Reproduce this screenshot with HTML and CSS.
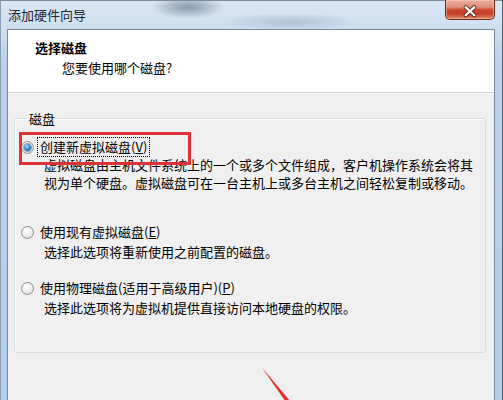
FILE: index.html
```html
<!DOCTYPE html>
<html lang="zh-CN">

<head>
    <meta charset="UTF-8">
    <meta name="viewport" content="width=device-width, initial-scale=1.0">
    <title>添加硬件向导</title>
    <link rel="stylesheet" href="styles.css">
</head>

<body>
    <div class="window">
        <div class="titlebar">
            <span class="title">添加硬件向导</span>
            <button class="close" aria-label="关闭">
                <svg width="50" height="20" viewBox="0 0 50 20">
                    <path d="M20.5 7 L29.5 15.5 M29.5 7 L20.5 15.5" stroke="#5a2418" stroke-width="4.2" stroke-linecap="round" />
                    <path d="M20.5 7 L29.5 15.5 M29.5 7 L20.5 15.5" stroke="#ffffff" stroke-width="2.4" stroke-linecap="round" />
                </svg>
            </button>
        </div>

        <div class="client">
            <div class="header">
                <div class="header-title">选择磁盘</div>
                <div class="header-sub">您要使用哪个磁盘?</div>
            </div>

            <div class="content">
                <fieldset class="group">
                    <legend>磁盘</legend>

                    <div class="option option-new">
                        <label class="option-label">
                            <span class="radio checked"></span>
                            <span class="caption focused">创建新虚拟磁盘(<u>V</u>)</span>
                        </label>
                        <p class="desc">虚拟磁盘由主机文件系统上的一个或多个文件组成，客户机操作系统会将其<br>视为单个硬盘。虚拟磁盘可在一台主机上或多台主机之间轻松复制或移动。</p>
                    </div>

                    <div class="option option-existing">
                        <label class="option-label">
                            <span class="radio"></span>
                            <span class="caption">使用现有虚拟磁盘(<u>E</u>)</span>
                        </label>
                        <p class="desc">选择此选项将重新使用之前配置的磁盘。</p>
                    </div>

                    <div class="option option-physical">
                        <label class="option-label">
                            <span class="radio"></span>
                            <span class="caption">使用物理磁盘(适用于高级用户)(<u>P</u>)</span>
                        </label>
                        <p class="desc">选择此选项将为虚拟机提供直接访问本地硬盘的权限。</p>
                    </div>
                </fieldset>
            </div>
        </div>
    </div>

    <!-- 标注：红框和箭头 -->
    <div class="mark-box"></div>
    <svg class="mark-arrow" width="45" height="40" viewBox="0 0 45 40">
        <polygon points="6.7,7.3 36.6,42.8 33.2,45.3" fill="#e0302f" />
    </svg>
</body>

</html>
```

FILE: styles.css
```css
* {
    box-sizing: border-box;
}

html,
body {
    margin: 0;
    height: 100%;
    overflow: hidden;
}

body {
    position: relative;
    font-family: "Noto Sans CJK SC", "Microsoft YaHei", sans-serif;
    font-size: 13px;
    color: #000;
    background: #b8d0ea;
}

.window {
    display: flex;
    flex-direction: column;
    height: 100%;
    padding: 0 8px 0 7px;
    background-color: #b8d0ea;
    background-image:
        radial-gradient(ellipse 38px 12px at 188px 7px, rgba(70, 92, 118, 0.55), transparent),
        radial-gradient(ellipse 70px 9px at 290px 22px, rgba(110, 135, 165, 0.35), transparent),
        linear-gradient(180deg, #dbe7f3 0, #cfe0f1 26px, #bad2eb 60px, #b6cfea 100%);
    box-shadow: inset 1px 0 #8d9fb6, inset -1px 0 #4f5e70, inset 0 1px #7d8c9e;
}

.titlebar {
    display: flex;
    justify-content: space-between;
    align-items: flex-start;
    height: 29px;
    flex-shrink: 0;
}

.title {
    padding: 6px 0 0 1px;
    line-height: 18px;
    color: #1b2633;
}

.close {
    width: 50px;
    height: 20px;
    padding: 0;
    border: 1px solid #6a2a1e;
    border-top: none;
    border-radius: 0 0 5px 5px;
    background: linear-gradient(180deg, #eab0a2 0, #df8c78 38%, #c9482c 52%, #c3412a 72%, #df8a68 100%);
    box-shadow: inset 0 0 0 1px rgba(255, 210, 190, 0.45);
    display: flex;
}

.client {
    flex: 1;
    display: flex;
    flex-direction: column;
    border: 1px solid #7b8899;
    border-bottom: none;
    background: #f0f0f0;
}

.header {
    background: #fff;
    padding: 9px 0 15px 27px;
    border-bottom: 1px solid #d0d0d0;
    box-shadow: 0 1px 0 #fafafa;
}

.header-title {
    font-weight: bold;
    line-height: 18px;
}

.header-sub {
    margin-top: 2px;
    padding-left: 27px;
    line-height: 18px;
}

.content {
    padding: 17px 8px 0 6px;
}

.group {
    margin: 0;
    padding: 11px 8px 35px 6px;
    border: 1px solid #d5dfe5;
    border-radius: 3px;
    box-shadow: inset 1px 1px 0 #fff;
}

.group legend {
    margin-left: 6px;
    padding: 0 2px;
    line-height: 17px;
}

.option-label {
    display: flex;
    align-items: center;
    line-height: 18px;
}

.option-existing {
    margin-top: 31px;
}

.option-physical {
    margin-top: 18px;
}

.radio {
    width: 13px;
    height: 13px;
    margin-right: 4px;
    border-radius: 50%;
    border: 1px solid #8f9193;
    background: radial-gradient(circle at 40% 35%, #ffffff 0, #eeeeee 45%, #cfcfcf 100%);
    display: flex;
    align-items: center;
    justify-content: center;
}

.radio.checked::after {
    content: "";
    width: 7px;
    height: 7px;
    border-radius: 50%;
    background: radial-gradient(circle at 40% 35%, #a9e2ff 0, #3a90d4 45%, #164a78 100%);
    box-shadow: 0 0 0 1px rgba(30, 70, 110, 0.45);
}

.caption {
    padding: 0 2px;
}

.caption.focused {
    outline: 1px dotted #000;
}

.desc {
    margin: 2px 0 0 23px;
    line-height: 18px;
    white-space: nowrap;
}

.option-new .desc {
    margin-top: 0;
}

.mark-box {
    position: absolute;
    left: 19px;
    top: 132px;
    width: 172px;
    height: 33px;
    border: 3px solid #db3236;
}

.mark-arrow {
    position: absolute;
    left: 255px;
    top: 360px;
    overflow: visible;
}
```
